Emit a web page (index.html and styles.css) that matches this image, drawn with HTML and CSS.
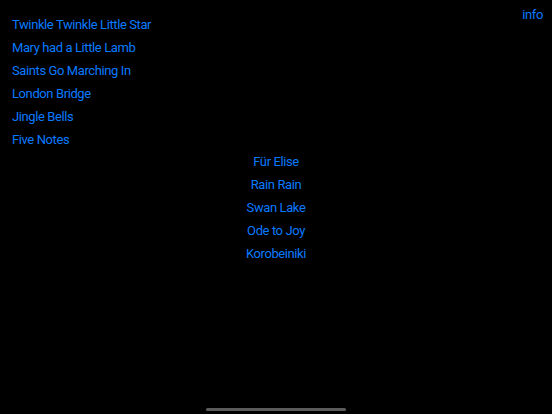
FILE: index.html
```html
<!DOCTYPE html>
<html>
<head>
<meta charset="utf-8">
<link rel="stylesheet" href="styles.css">
</head>
<body>
<div class="screen">
  <a class="info">info</a>
  <ul class="songs left">
    <li>Twinkle Twinkle Little Star</li>
    <li>Mary had a Little Lamb</li>
    <li>Saints Go Marching In</li>
    <li>London Bridge</li>
    <li>Jingle Bells</li>
    <li>Five Notes</li>
  </ul>
  <ul class="songs center">
    <li>Für Elise</li>
    <li>Rain Rain</li>
    <li>Swan Lake</li>
    <li>Ode to Joy</li>
    <li>Korobeiniki</li>
  </ul>
  <div class="home-indicator"></div>
</div>
</body>
</html>
```
FILE: styles.css
```css
html, body {
  margin: 0;
  padding: 0;
  background: #000;
}
.screen {
  position: relative;
  width: 552px;
  height: 414px;
  overflow: hidden;
  font-family: Roboto, "Liberation Sans", sans-serif;
  font-size: 13px;
  letter-spacing: -0.4px;
  color: #0a7aff;
  padding-top: 13px;
  box-sizing: border-box;
}
.songs {
  list-style: none;
  margin: 0;
  padding: 0;
}
.songs li {
  line-height: 23px;
  height: 23px;
}
.left {
  padding-left: 12px;
}
.center {
  text-align: center;
  margin-top: -1px;
}
.info {
  position: absolute;
  top: 6px;
  right: 9px;
  line-height: 18px;
}
.home-indicator {
  position: absolute;
  left: 206px;
  bottom: 3px;
  width: 140px;
  height: 3px;
  border-radius: 2px;
  background: #5c5c5c;
}
```
